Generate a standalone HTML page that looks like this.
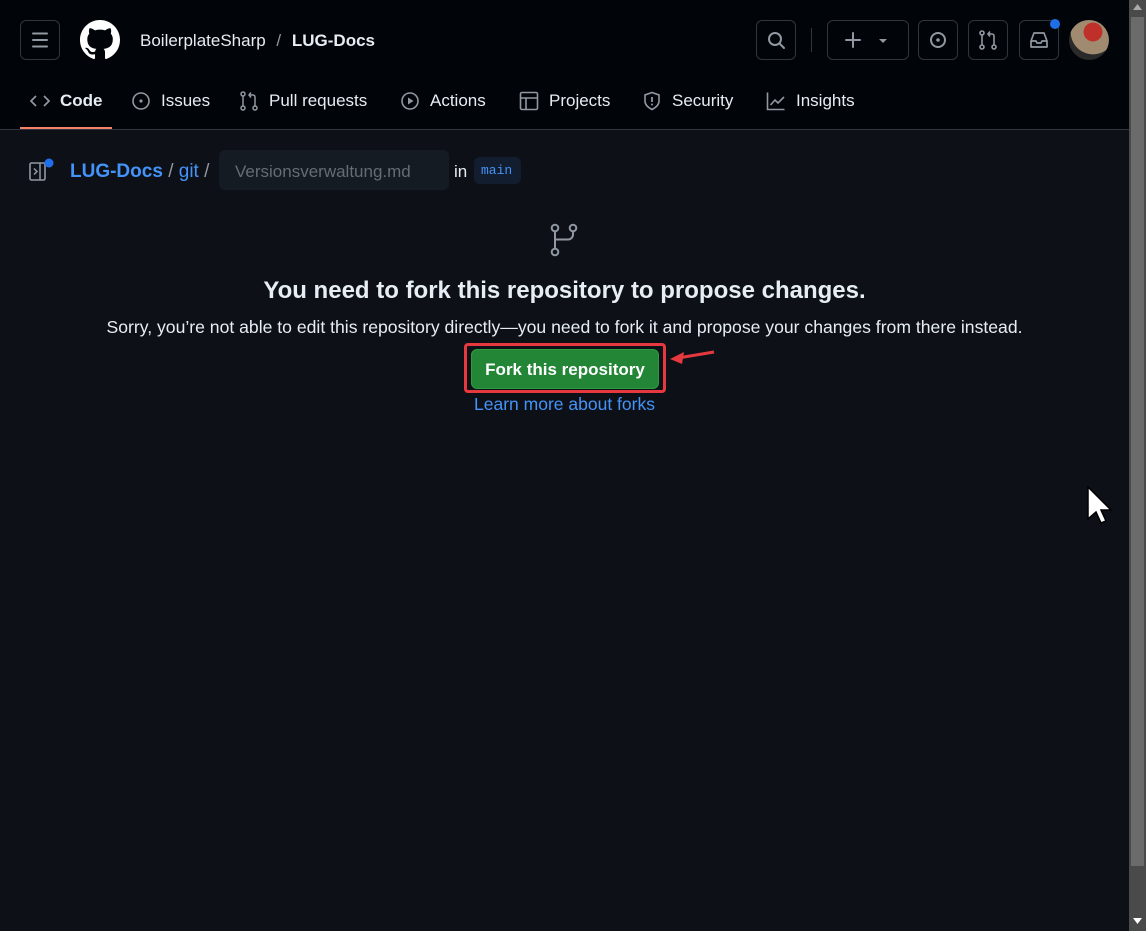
<!DOCTYPE html>
<html><head><meta charset="utf-8"><style>
*{box-sizing:border-box;margin:0;padding:0}
body{width:1146px;height:931px;background:#0d1117;font-family:"Liberation Sans",sans-serif;color:#e6edf3;position:relative;overflow:hidden}
.hdr{position:absolute;left:0;top:0;width:1129px;height:130px;background:#010409;border-bottom:1px solid #30363d}
.btn{position:absolute;border:1px solid #30363d;border-radius:6px;height:40px;top:20px}
.tab{position:absolute;top:91px;font-size:17px;color:#e6edf3;display:flex;align-items:center;gap:10px}
svg{display:block}
.sb{position:absolute;left:1129px;top:0;width:17px;height:931px;background:#4a4a4a}
</style></head><body>
<div class="hdr">
 <div class="btn" style="left:20px;width:40px"><svg width="38" height="38" viewBox="0 0 38 38"><path d="M12 12.5h14M12 19h14M12 25.5h14" stroke="#9198a1" stroke-width="2" stroke-linecap="round"/></svg></div>
 <svg style="position:absolute;left:80px;top:20px" width="40" height="40" viewBox="0 0 16 16"><path fill="#fff" d="M8 0C3.58 0 0 3.58 0 8c0 3.54 2.290 6.530 5.470 7.590.4.07.55-.17.55-.38 0-.19-.01-.82-.01-1.49-2.01.37-2.530-.49-2.690-.94-.09-.23-.48-.94-.82-1.130-.28-.15-.68-.52-.01-.53.63-.01 1.080.58 1.230.82.72 1.210 1.870.87 2.330.66.07-.52.28-.87.51-1.070-1.780-.2-3.640-.89-3.640-3.950 0-.87.31-1.590.82-2.150-.08-.2-.36-1.020.08-2.120 0 0 .67-.21 2.200.82.64-.18 1.320-.27 2-.27.68 0 1.360.09 2 .27 1.530-1.040 2.200-.82 2.200-.82.44 1.100.16 1.920.08 2.120.51.56.82 1.270.82 2.150 0 3.070-1.870 3.750-3.650 3.950.29.25.54.73.54 1.480 0 1.070-.01 1.930-.01 2.200 0 .21.15.46.55.38A8.013 8.013 0 0016 8c0-4.42-3.58-8-8-8z"/></svg>
 <div style="position:absolute;left:140px;top:31px;font-size:17px;color:#e6edf3">BoilerplateSharp <span style="color:#9198a1;margin:0 6px">/</span> <b>LUG-Docs</b></div>
 <div class="btn" style="left:756px;width:40px"><svg width="38" height="38" viewBox="0 0 38 38"><circle cx="18" cy="18" r="6" stroke="#9198a1" stroke-width="2" fill="none"/><path d="M22.5 22.5l4.5 4.5" stroke="#9198a1" stroke-width="2" stroke-linecap="round"/></svg></div>
 <div style="position:absolute;left:811px;top:28px;width:1px;height:24px;background:#30363d"></div>
 <div class="btn" style="left:827px;width:82px"><svg width="80" height="38"><path d="M25 12v14M18 19h14" stroke="#9198a1" stroke-width="2" stroke-linecap="round"/><path d="M51 18h8l-4 4z" fill="#9198a1"/></svg></div>
 <div class="btn" style="left:918px;width:40px"><svg width="38" height="38"><circle cx="19" cy="19" r="7" stroke="#9198a1" stroke-width="2" fill="none"/><circle cx="19" cy="19" r="1.8" fill="#9198a1"/></svg></div>
 <div class="btn" style="left:968px;width:40px"><svg width="38" height="38"><circle cx="13" cy="12" r="2" stroke="#9198a1" stroke-width="1.6" fill="none"/><circle cx="13" cy="26" r="2" stroke="#9198a1" stroke-width="1.6" fill="none"/><circle cx="25" cy="26" r="2" stroke="#9198a1" stroke-width="1.6" fill="none"/><path d="M13 14v10M25 24v-9a2 2 0 00-2-2h-3M21 10.5l-2 2.5 2 2.5" stroke="#9198a1" stroke-width="1.6" fill="none"/></svg></div>
 <div class="btn" style="left:1019px;width:40px"><svg width="38" height="38"><path d="M11 20l3-8h10l3 8v6H11zM11 20h5l1 2h4l1-2h5" stroke="#9198a1" stroke-width="1.7" fill="none" stroke-linejoin="round"/></svg></div>
 <div style="position:absolute;left:1050px;top:19px;width:10px;height:10px;border-radius:50%;background:#1f6feb"></div>
 <div style="position:absolute;left:1069px;top:20px;width:40px;height:40px;border-radius:50%;background:radial-gradient(circle at 60% 30%,#c0302a 0 25%,#a08a70 26% 60%,#2a2a2a 61%)"></div>
 <div class="tab" style="left:30px;font-weight:bold"><svg width="20" height="20"><path d="M6 5l-5 5 5 5M14 5l5 5-5 5" stroke="#9198a1" stroke-width="1.7" fill="none"/></svg>Code</div>
 <div style="position:absolute;left:20px;top:127px;width:92px;height:2px;background:#f78166"></div>
 <div class="tab" style="left:131px"><svg width="20" height="20"><circle cx="10" cy="10" r="8" stroke="#9198a1" stroke-width="1.6" fill="none"/><circle cx="10" cy="10" r="1.6" fill="#9198a1"/></svg>Issues</div>
 <div class="tab" style="left:239px"><svg width="20" height="20"><circle cx="4" cy="3" r="2" stroke="#9198a1" stroke-width="1.5" fill="none"/><circle cx="4" cy="17" r="2" stroke="#9198a1" stroke-width="1.5" fill="none"/><circle cx="16" cy="17" r="2" stroke="#9198a1" stroke-width="1.5" fill="none"/><path d="M4 5v10M16 15V6a2 2 0 00-2-2h-3M12 1.5l-2 2.5 2 2.5" stroke="#9198a1" stroke-width="1.5" fill="none"/></svg>Pull requests</div>
 <div class="tab" style="left:400px"><svg width="20" height="20"><circle cx="10" cy="10" r="8" stroke="#9198a1" stroke-width="1.6" fill="none"/><path d="M8 6.5v7l5.5-3.5z" fill="#9198a1"/></svg>Actions</div>
 <div class="tab" style="left:519px"><svg width="20" height="20"><rect x="1.5" y="1.5" width="17" height="17" rx="1.5" stroke="#9198a1" stroke-width="1.6" fill="none"/><path d="M1.5 7h17M7 7v11.5" stroke="#9198a1" stroke-width="1.6"/></svg>Projects</div>
 <div class="tab" style="left:642px"><svg width="20" height="20"><path d="M10 1.5l7 2.5v6c0 4-3 6.5-7 8.5-4-2-7-4.5-7-8.5V4z" stroke="#9198a1" stroke-width="1.6" fill="none"/><path d="M10 6v5" stroke="#9198a1" stroke-width="1.8"/><circle cx="10" cy="13.5" r="1" fill="#9198a1"/></svg>Security</div>
 <div class="tab" style="left:766px"><svg width="20" height="20"><path d="M1.5 1.5v17h17M4.5 14l4.5-5 3 3 6-6" stroke="#9198a1" stroke-width="1.6" fill="none"/></svg>Insights</div>
</div>
<svg style="position:absolute;left:29px;top:158px" width="26" height="26"><rect x="1" y="5" width="15" height="17" rx="1.5" stroke="#9198a1" stroke-width="1.6" fill="none"/><path d="M11 5v17M5 10.5l3 3-3 3" stroke="#9198a1" stroke-width="1.5" fill="none"/><circle cx="20" cy="5" r="4.5" fill="#1f6feb"/></svg>
<div style="position:absolute;left:70px;top:161px;font-size:19px;color:#4493f8"><b>LUG-Docs</b> <span style="color:#9198a1">/</span> git <span style="color:#9198a1">/</span></div>
<div style="position:absolute;left:219px;top:150px;width:230px;height:40px;background:#151b23;border-radius:6px;color:#656c76;font-size:17px;padding:12px 0 0 16px">Versionsverwaltung.md</div>
<div style="position:absolute;left:454px;top:162px;font-size:17px">in</div>
<div style="position:absolute;left:474px;top:157px;width:47px;height:27px;background:#121d2f;border-radius:6px;color:#4493f8;font:13px 'Liberation Mono',monospace;padding:6px 0 0 7px">main</div>
<svg style="position:absolute;left:546px;top:222px" width="36" height="36" viewBox="0 0 36 36"><circle cx="9" cy="6" r="3.3" stroke="#9198a1" stroke-width="2" fill="none"/><circle cx="27" cy="6" r="3.3" stroke="#9198a1" stroke-width="2" fill="none"/><circle cx="9" cy="30" r="3.3" stroke="#9198a1" stroke-width="2" fill="none"/><path d="M9 9.5v17M27 9.5v3a5 5 0 01-5 5H9" stroke="#9198a1" stroke-width="2" fill="none"/></svg>
<div style="position:absolute;left:0;width:1129px;top:277px;text-align:center;font-size:24px;font-weight:bold">You need to fork this repository to propose changes.</div>
<div style="position:absolute;left:0;width:1129px;top:317px;text-align:center;font-size:17.6px">Sorry, you’re not able to edit this repository directly—you need to fork it and propose your changes from there instead.</div>
<div style="position:absolute;left:464px;top:343px;width:202px;height:50px;border:3px solid #e5393f;border-radius:4px"></div>
<div style="position:absolute;left:471px;top:349px;width:188px;height:40px;background:#238636;border:1px solid #2e9a43;border-radius:6px;color:#fff;font-weight:bold;font-size:17px;text-align:center;line-height:40px">Fork this repository</div>
<svg style="position:absolute;left:666px;top:348px" width="50" height="20"><path d="M48 4L12 10" stroke="#e5393f" stroke-width="3"/><path d="M4 11l14-7-2 12z" fill="#e5393f"/></svg>
<div style="position:absolute;left:0;width:1129px;top:394px;text-align:center;font-size:17.5px;color:#4493f8">Learn more about forks</div>
<svg style="position:absolute;left:1086px;top:486px" width="26" height="40"><path d="M2 1v32l8-7 5 11 5-2-5-11h10z" fill="#fff" stroke="#000" stroke-width="1.5"/></svg>
<div class="sb"><div style="position:absolute;left:2px;top:17px;width:13px;height:849px;background:#6b6b6b"></div>
<svg style="position:absolute;left:4px;top:4px" width="9" height="6"><path d="M0 6h9L4.5 0z" fill="#aaa"/></svg>
<svg style="position:absolute;left:4px;top:918px" width="9" height="6"><path d="M0 0h9L4.5 6z" fill="#fff"/></svg></div>
</body></html>
